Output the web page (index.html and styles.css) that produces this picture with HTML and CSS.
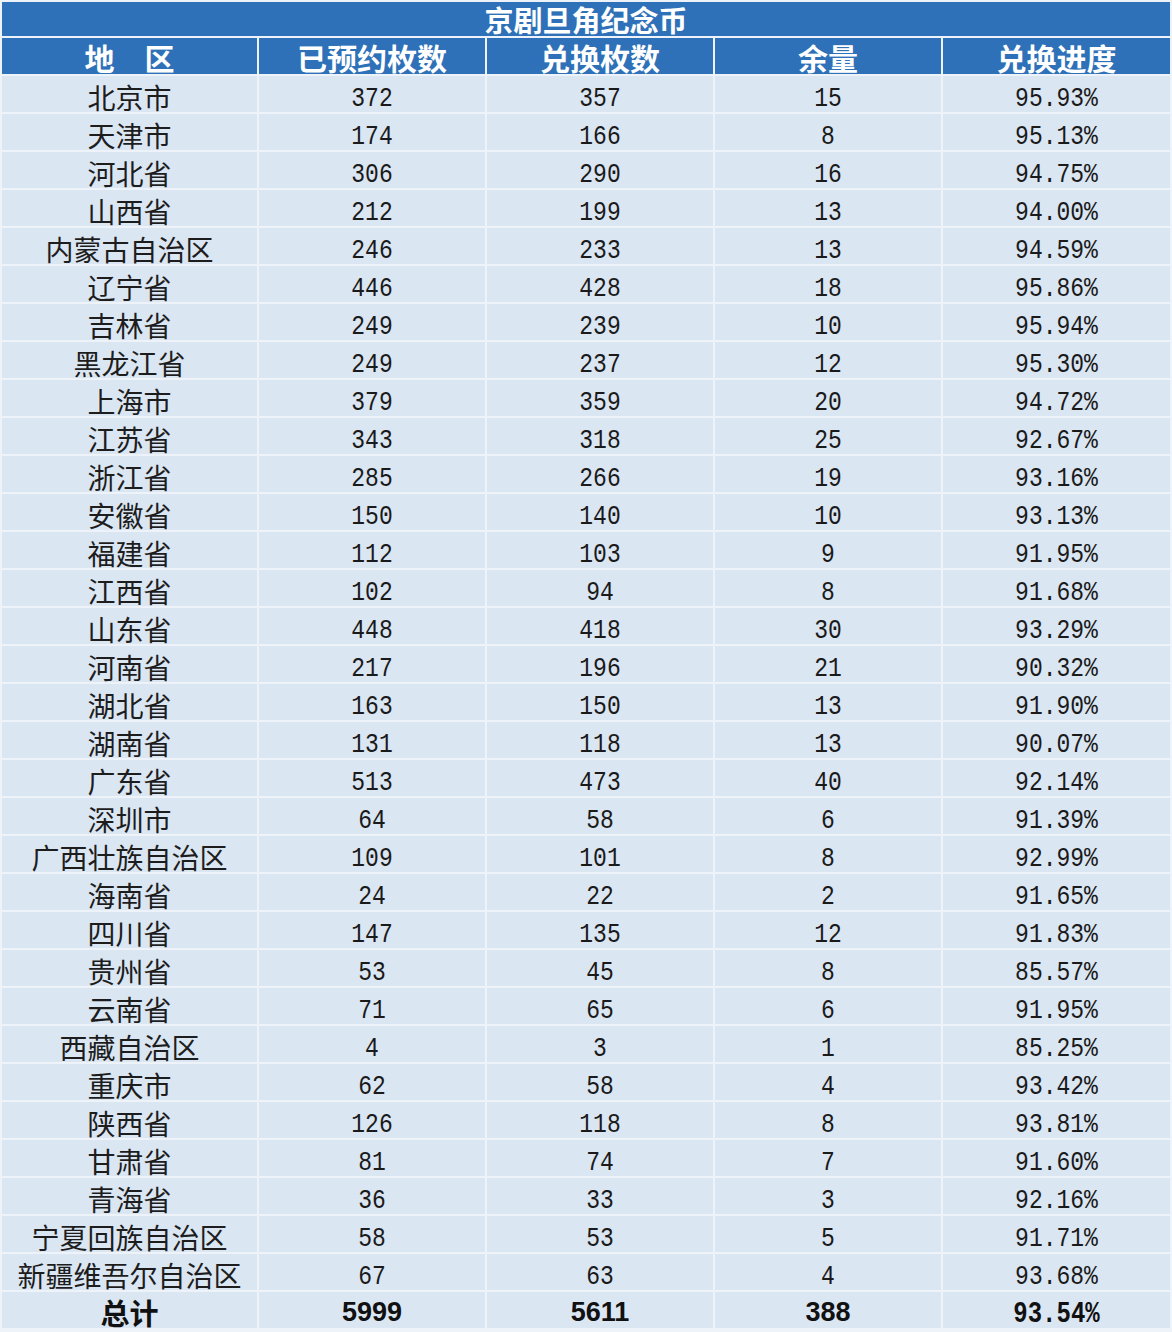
FILE: index.html
```html
<!DOCTYPE html>
<html lang="zh-CN">
<head>
<meta charset="utf-8">
<title>京剧旦角纪念币</title>
<link rel="stylesheet" href="styles.css">
</head>
<body>
<table class="coin-table">
  <colgroup>
    <col class="c-region"><col class="c-num"><col class="c-num"><col class="c-num"><col class="c-pct">
  </colgroup>
  <thead>
    <tr><th class="title" colspan="5">京剧旦角纪念币</th></tr>
    <tr class="head">
      <th>地　区</th><th>已预约枚数</th><th>兑换枚数</th><th>余量</th><th>兑换进度</th>
    </tr>
  </thead>
  <tbody>
    <tr><td class="region">北京市</td><td><span class="num">372</span></td><td><span class="num">357</span></td><td><span class="num">15</span></td><td><span class="num">95.93%</span></td></tr>
    <tr><td class="region">天津市</td><td><span class="num">174</span></td><td><span class="num">166</span></td><td><span class="num">8</span></td><td><span class="num">95.13%</span></td></tr>
    <tr><td class="region">河北省</td><td><span class="num">306</span></td><td><span class="num">290</span></td><td><span class="num">16</span></td><td><span class="num">94.75%</span></td></tr>
    <tr><td class="region">山西省</td><td><span class="num">212</span></td><td><span class="num">199</span></td><td><span class="num">13</span></td><td><span class="num">94.00%</span></td></tr>
    <tr><td class="region">内蒙古自治区</td><td><span class="num">246</span></td><td><span class="num">233</span></td><td><span class="num">13</span></td><td><span class="num">94.59%</span></td></tr>
    <tr><td class="region">辽宁省</td><td><span class="num">446</span></td><td><span class="num">428</span></td><td><span class="num">18</span></td><td><span class="num">95.86%</span></td></tr>
    <tr><td class="region">吉林省</td><td><span class="num">249</span></td><td><span class="num">239</span></td><td><span class="num">10</span></td><td><span class="num">95.94%</span></td></tr>
    <tr><td class="region">黑龙江省</td><td><span class="num">249</span></td><td><span class="num">237</span></td><td><span class="num">12</span></td><td><span class="num">95.30%</span></td></tr>
    <tr><td class="region">上海市</td><td><span class="num">379</span></td><td><span class="num">359</span></td><td><span class="num">20</span></td><td><span class="num">94.72%</span></td></tr>
    <tr><td class="region">江苏省</td><td><span class="num">343</span></td><td><span class="num">318</span></td><td><span class="num">25</span></td><td><span class="num">92.67%</span></td></tr>
    <tr><td class="region">浙江省</td><td><span class="num">285</span></td><td><span class="num">266</span></td><td><span class="num">19</span></td><td><span class="num">93.16%</span></td></tr>
    <tr><td class="region">安徽省</td><td><span class="num">150</span></td><td><span class="num">140</span></td><td><span class="num">10</span></td><td><span class="num">93.13%</span></td></tr>
    <tr><td class="region">福建省</td><td><span class="num">112</span></td><td><span class="num">103</span></td><td><span class="num">9</span></td><td><span class="num">91.95%</span></td></tr>
    <tr><td class="region">江西省</td><td><span class="num">102</span></td><td><span class="num">94</span></td><td><span class="num">8</span></td><td><span class="num">91.68%</span></td></tr>
    <tr><td class="region">山东省</td><td><span class="num">448</span></td><td><span class="num">418</span></td><td><span class="num">30</span></td><td><span class="num">93.29%</span></td></tr>
    <tr><td class="region">河南省</td><td><span class="num">217</span></td><td><span class="num">196</span></td><td><span class="num">21</span></td><td><span class="num">90.32%</span></td></tr>
    <tr><td class="region">湖北省</td><td><span class="num">163</span></td><td><span class="num">150</span></td><td><span class="num">13</span></td><td><span class="num">91.90%</span></td></tr>
    <tr><td class="region">湖南省</td><td><span class="num">131</span></td><td><span class="num">118</span></td><td><span class="num">13</span></td><td><span class="num">90.07%</span></td></tr>
    <tr><td class="region">广东省</td><td><span class="num">513</span></td><td><span class="num">473</span></td><td><span class="num">40</span></td><td><span class="num">92.14%</span></td></tr>
    <tr><td class="region">深圳市</td><td><span class="num">64</span></td><td><span class="num">58</span></td><td><span class="num">6</span></td><td><span class="num">91.39%</span></td></tr>
    <tr><td class="region">广西壮族自治区</td><td><span class="num">109</span></td><td><span class="num">101</span></td><td><span class="num">8</span></td><td><span class="num">92.99%</span></td></tr>
    <tr><td class="region">海南省</td><td><span class="num">24</span></td><td><span class="num">22</span></td><td><span class="num">2</span></td><td><span class="num">91.65%</span></td></tr>
    <tr><td class="region">四川省</td><td><span class="num">147</span></td><td><span class="num">135</span></td><td><span class="num">12</span></td><td><span class="num">91.83%</span></td></tr>
    <tr><td class="region">贵州省</td><td><span class="num">53</span></td><td><span class="num">45</span></td><td><span class="num">8</span></td><td><span class="num">85.57%</span></td></tr>
    <tr><td class="region">云南省</td><td><span class="num">71</span></td><td><span class="num">65</span></td><td><span class="num">6</span></td><td><span class="num">91.95%</span></td></tr>
    <tr><td class="region">西藏自治区</td><td><span class="num">4</span></td><td><span class="num">3</span></td><td><span class="num">1</span></td><td><span class="num">85.25%</span></td></tr>
    <tr><td class="region">重庆市</td><td><span class="num">62</span></td><td><span class="num">58</span></td><td><span class="num">4</span></td><td><span class="num">93.42%</span></td></tr>
    <tr><td class="region">陕西省</td><td><span class="num">126</span></td><td><span class="num">118</span></td><td><span class="num">8</span></td><td><span class="num">93.81%</span></td></tr>
    <tr><td class="region">甘肃省</td><td><span class="num">81</span></td><td><span class="num">74</span></td><td><span class="num">7</span></td><td><span class="num">91.60%</span></td></tr>
    <tr><td class="region">青海省</td><td><span class="num">36</span></td><td><span class="num">33</span></td><td><span class="num">3</span></td><td><span class="num">92.16%</span></td></tr>
    <tr><td class="region">宁夏回族自治区</td><td><span class="num">58</span></td><td><span class="num">53</span></td><td><span class="num">5</span></td><td><span class="num">91.71%</span></td></tr>
    <tr><td class="region">新疆维吾尔自治区</td><td><span class="num">67</span></td><td><span class="num">63</span></td><td><span class="num">4</span></td><td><span class="num">93.68%</span></td></tr>
    <tr class="total"><td class="region">总计</td><td>5999</td><td>5611</td><td>388</td><td><span class="num">93.54%</span></td></tr>
  </tbody>
</table>
</body>
</html>
```
FILE: styles.css
```css
html, body {
  margin: 0;
  padding: 0;
  background: #eef3fa;
}

.coin-table {
  width: 1172px;
  table-layout: fixed;
  border-collapse: separate;
  border-spacing: 2px;
  background: #eef3fa;
  font-family: "Noto Sans CJK SC", "Liberation Sans", sans-serif;
}

.c-region { width: 255px; }
.c-num { width: 226px; }
.c-pct { width: 227px; }

.coin-table th,
.coin-table td {
  padding: 0;
  text-align: center;
  vertical-align: middle;
  white-space: nowrap;
  line-height: 1;
}

.title {
  height: 34px;
  background: #2e71b8;
  color: #ffffff;
  font-size: 29px;
  font-weight: 700;
}

.head th {
  background: #2e71b8;
  color: #ffffff;
  font-size: 30px;
  font-weight: 700;
  padding-top: 1px;
  height: 35px;
}

.coin-table td {
  height: 31px;
  padding-top: 5px;
  background: #dbe6f3;
  color: #1d1d1d;
}

.coin-table .region {
  font-size: 28px;
  font-weight: 400;
}

.num {
  display: inline-block;
  vertical-align: middle;
  font-family: "Liberation Mono", "DejaVu Sans Mono", monospace;
  font-size: 23px;
  line-height: 1;
  transform: translateY(3px) scaleY(1.2);
  color: #1a1a1a;
}

.total td {
  font-family: "Liberation Sans", sans-serif;
  font-size: 27px;
  font-weight: 700;
  color: #111111;
}

.total td.region {
  font-family: "Noto Sans CJK SC", sans-serif;
  font-size: 29px;
  font-weight: 700;
}

.total .num {
  font-weight: 700;
  font-size: 24px;
  color: #111111;
  transform: translateY(1px) scaleY(1.2);
}
```
